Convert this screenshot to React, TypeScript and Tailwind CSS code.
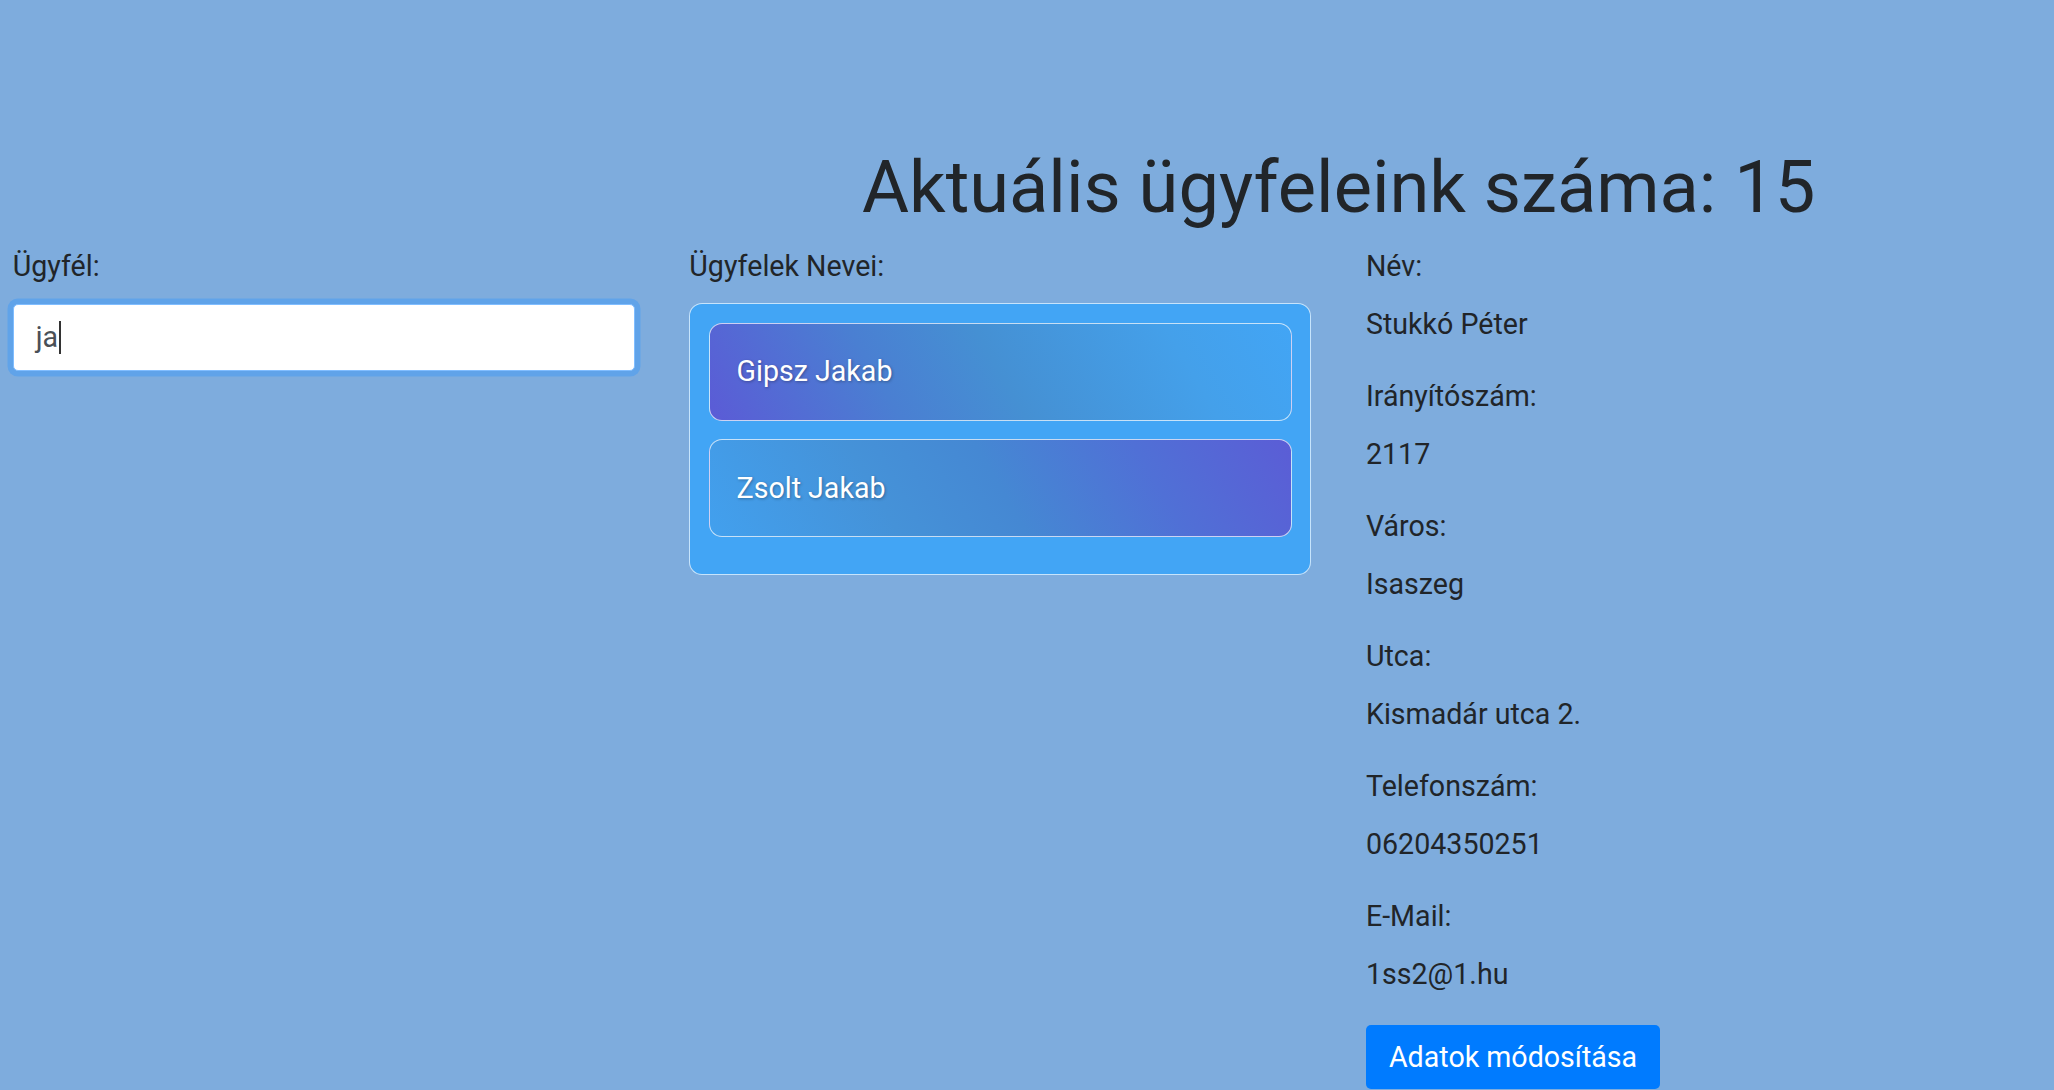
const fields = [
  { label: 'Név:', value: 'Stukkó Péter' },
  { label: 'Irányítószám:', value: '2117' },
  { label: 'Város:', value: 'Isaszeg' },
  { label: 'Utca:', value: 'Kismadár utca 2.' },
  { label: 'Telefonszám:', value: '06204350251' },
  { label: 'E-Mail:', value: '1ss2@1.hu' },
];

const names = [
  { name: 'Gipsz Jakab', bg: 'bg-[linear-gradient(60deg,#5b5bd6_0%,#4a7fd2_30%,#4590d3_50%,#44a0ea_80%,#42a5f5_100%)]' },
  { name: 'Zsolt Jakab', bg: 'bg-[linear-gradient(60deg,#42a0ee_0%,#4592d8_30%,#4588d3_50%,#5070d6_75%,#5b5dd6_100%)]' },
];

function SearchField() {
  return (
    <div>
      <label className="block mb-[15.9px]">Ügyfél:</label>
      <div className="h-[67px] rounded-[5px] border border-[#80bdff] bg-white px-[22px] flex items-center text-[#495057] shadow-[0_0_0_5.5px_#60a3e9]">
        <span>ja</span>
        <span className="inline-block w-[1.5px] h-[33px] bg-[#333] ml-px" />
      </div>
    </div>
  );
}

function NameList() {
  return (
    <div>
      <label className="block mb-[15.1px]">Ügyfelek Nevei:</label>
      <div className="rounded-[13px] border border-white/70 bg-[#42a5f5] px-[18.5px] pt-[18.5px] pb-[18px]">
        {names.map((n) => (
          <div
            key={n.name}
            className={`mb-[18.5px] rounded-[13px] border border-white/70 px-[26.7px] py-[26.5px] text-white [text-shadow:1px_1px_3px_rgba(0,0,0,0.3)] ${n.bg}`}
          >
            {n.name}
          </div>
        ))}
      </div>
    </div>
  );
}

function Details() {
  return (
    <div>
      {fields.map((f) => (
        <div key={f.label}>
          <label className="block mb-[15.1px]">{f.label}</label>
          <p className="mb-[29.1px]">{f.value}</p>
        </div>
      ))}
      <button className="rounded-[5px] bg-[#007bff] px-[23px] py-[10.5px] text-white">
        Adatok módosítása
      </button>
    </div>
  );
}

export default function App() {
  return (
    <div className="min-h-screen bg-[#7eacdd] font-['Roboto',sans-serif] text-[#212529]">
      <div className="pt-[144px] pl-[862px]">
        <h1 className="text-[72.2px] leading-[1.21] font-normal">Aktuális ügyfeleink száma: 15</h1>
      </div>
      <div className="mt-[14.1px] grid grid-cols-[622px_622px_622px] gap-x-[54.67px] pl-[12.67px] text-[28.6px] leading-[1.5]">
        <SearchField />
        <NameList />
        <Details />
      </div>
    </div>
  );
}
